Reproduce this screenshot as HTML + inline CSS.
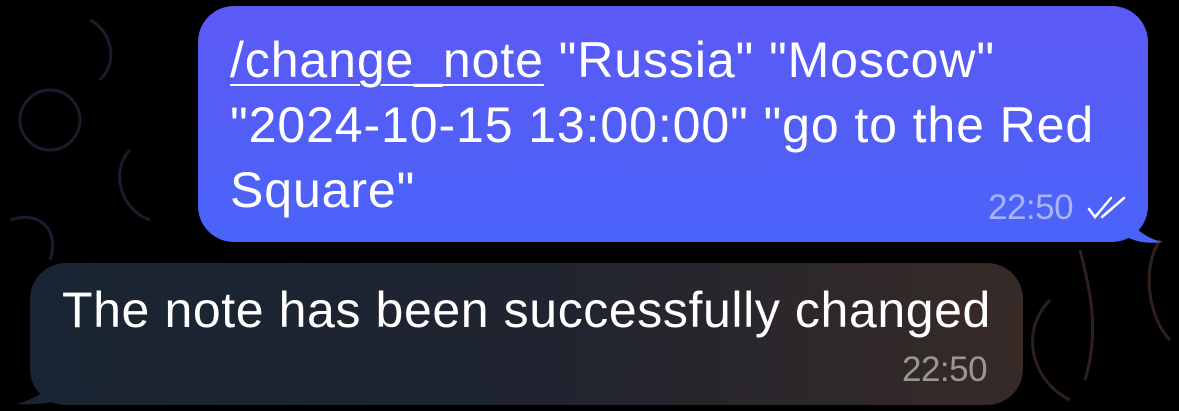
<!DOCTYPE html>
<html><head><style>
body{margin:0;width:1179px;height:411px;background:#000;overflow:hidden;position:relative;font-family:"Liberation Sans",Arial,sans-serif;}
.out{position:absolute;left:198px;top:6px;width:950px;height:236px;border-radius:36px;background:linear-gradient(180deg,#5c5af6,#4a63f8);}
.txt{position:absolute;left:230px;top:28px;color:#fff;font-size:50px;line-height:65px;width:940px;white-space:nowrap;letter-spacing:0.9px;}
.t1{position:absolute;left:988px;top:189px;font-size:35px;line-height:38px;color:#a9b4f8;letter-spacing:-0.5px;}
.in{position:absolute;left:30px;top:263px;width:993px;height:142px;border-radius:36px;background:linear-gradient(90deg,#1a2533,#1f2430 50%,#372a27);}
.txt2{position:absolute;left:62px;top:282px;color:#fff;font-size:50px;line-height:57px;white-space:nowrap;letter-spacing:0.6px;}
.t2{position:absolute;left:902px;top:351px;font-size:35px;line-height:38px;color:#9a9794;letter-spacing:-0.5px;}
</style></head><body>
<svg width="1179" height="411" style="position:absolute;left:0;top:0" >
<g fill="none" stroke="#161d2c" stroke-width="3">
<circle cx="50" cy="120" r="30"/><path d="M90 20c20 10 30 40 10 60M130 150c-20 20-10 60 20 70M10 220c30-10 50 10 40 40"/>
</g>
<g fill="none" stroke="#2e201b" stroke-width="3">
<path d="M1080 250c10 40 20 80 5 130M1160 240c-20 30-10 80 10 100M1050 300c-30 30-20 80 20 100"/>
</g>
<path d="M1120 210 Q1140 238 1163 242 Q1140 245 1125 236Z" fill="#4a63f8"/>
<path d="M60 370 Q50 395 17 404 Q50 406 70 396Z" fill="#1a2533"/>
</svg>
<div class="out"></div>
<div class="txt"><span style="text-decoration:underline;text-underline-offset:7px;text-decoration-thickness:2px">/change_note</span> "Russia" "Moscow"<br>"2024-10-15 13:00:00" "go to the Red<br>Square"</div>
<div class="t1">22:50</div>
<svg style="position:absolute;left:1086px;top:195px" width="44" height="26"><g stroke="#fff" stroke-width="2.5" fill="none" stroke-linecap="round"><path d="M3 14l6 8 16-19"/><path d="M16 22l22-19"/></g></svg>
<div class="in"></div>
<div class="txt2">The note has been successfully changed</div>
<div class="t2">22:50</div>
</body></html>
